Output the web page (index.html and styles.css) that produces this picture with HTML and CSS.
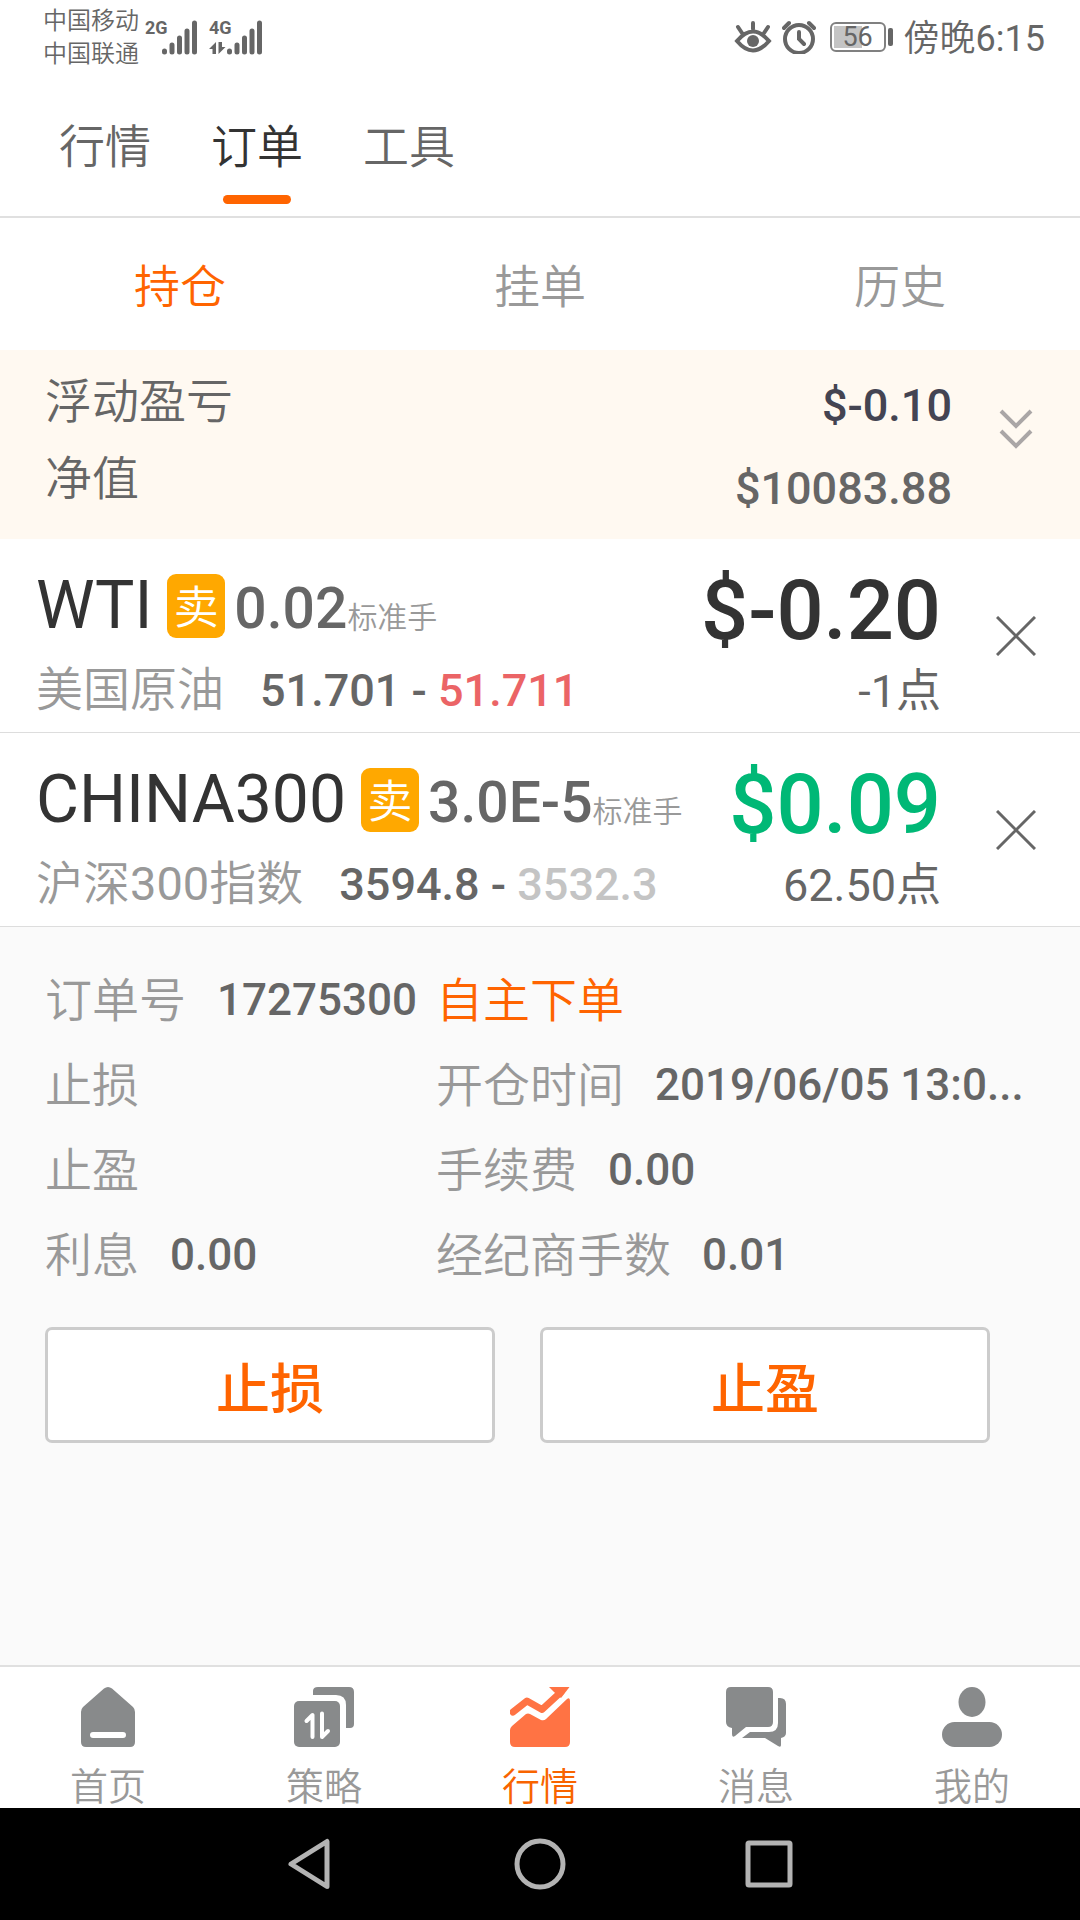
FILE: index.html
```html
<!DOCTYPE html>
<html lang="zh-CN">
<head>
<meta charset="utf-8">
<meta name="viewport" content="width=device-width, initial-scale=1">
<title>订单</title>
<link rel="stylesheet" href="styles.css">
</head>
<body>
<div class="app">
  <header class="status">
    <div class="carriers"><span>中国移动</span><span>中国联通</span></div>
    <svg class="signals" width="120" height="52" viewBox="0 -16 120 52" aria-hidden="true">
      <g class="signal-text"><text x="0" y="13">2G</text><text x="64" y="13">4G</text></g>
      <g class="bars">
        <path d="M19.500 30v1M27 24v7M34.500 17v14M42 10v21M49.500 2v29"/>
        <path d="M84.500 30v1M92 24v7M99.500 17v14M107 10v21M114.500 2v29"/>
      </g>
      <path class="data" d="M64 28l7-7v12h-3.500v-5zM73.500 21h3.500v5h3.500l-7 7z"/>
    </svg>
    <div class="status-right">
      <svg width="38" height="34" viewBox="0 0 38 34" class="line-icon" aria-hidden="true">
        <path d="M3 21Q19 2 35 21Q19 40 3 21zM19 9V3M8 13L4 7M30 13l4-6"/><circle cx="19" cy="21" r="6" class="solid"/>
      </svg>
      <svg width="34" height="34" viewBox="0 0 34 34" class="line-icon" aria-hidden="true">
        <circle cx="17" cy="19" r="14"/><path d="M17 12v7l5 5M2 8l5-5M32 8l-5-5"/>
      </svg>
      <div class="battery"><span>56</span></div>
      <span class="clock">傍晚<span class="digits">6:15</span></span>
    </div>
  </header>

  <nav class="tabs">
    <a href="#quotes">行情</a>
    <a href="#orders" class="active">订单</a>
    <a href="#tools">工具</a>
  </nav>

  <nav class="subtabs">
    <a href="#positions" class="active">持仓</a>
    <a href="#pending">挂单</a>
    <a href="#history">历史</a>
  </nav>

  <section class="summary">
    <div class="summary-labels"><span>浮动盈亏</span><span>净值</span></div>
    <div class="summary-values"><span class="dark">$-0.10</span><span>$10083.88</span></div>
    <button class="icon-button" type="button" aria-label="展开">
      <svg width="34" height="40" viewBox="0 0 34 40"><path d="M2 2l15 15L32 2M2 22l15 15L32 22" fill="none" stroke="#aaa6a6" stroke-width="4"/></svg>
    </button>
  </section>

  <main class="content">
    <article class="position">
      <div class="position-info">
        <div class="position-title"><h2>WTI</h2><span class="badge">卖</span><span class="lots">0.02</span><small>标准手</small></div>
        <div class="position-detail"><span class="name">美国原油</span><span class="num">51.701 - <span class="loss">51.711</span></span></div>
      </div>
      <div class="position-profit"><strong>$-0.20</strong><span>-1点</span></div>
      <button class="icon-button" type="button" aria-label="平仓">
        <svg width="40" height="40" viewBox="0 0 40 40"><path d="M1 1l38 38M39 1L1 39" stroke="#666" stroke-width="3"/></svg>
      </button>
    </article>
    <article class="position">
      <div class="position-info">
        <div class="position-title"><h2>CHINA300</h2><span class="badge">卖</span><span class="lots">3.0E-5</span><small>标准手</small></div>
        <div class="position-detail"><span class="name">沪深<span class="digits">300</span>指数</span><span class="num">3594.8 - <span class="muted">3532.3</span></span></div>
      </div>
      <div class="position-profit gain"><strong>$0.09</strong><span>62.50点</span></div>
      <button class="icon-button" type="button" aria-label="平仓">
        <svg width="40" height="40" viewBox="0 0 40 40"><path d="M1 1l38 38M39 1L1 39" stroke="#666" stroke-width="3"/></svg>
      </button>
    </article>

    <section class="order">
      <dl class="fields">
        <div><dt>订单号</dt><dd>17275300</dd></div>
        <div><dt class="accent">自主下单</dt></div>
        <div><dt>止损</dt></div>
        <div><dt>开仓时间</dt><dd>2019/06/05 13:0...</dd></div>
        <div><dt>止盈</dt></div>
        <div><dt>手续费</dt><dd>0.00</dd></div>
        <div><dt>利息</dt><dd>0.00</dd></div>
        <div><dt>经纪商手数</dt><dd>0.01</dd></div>
      </dl>
      <div class="actions">
        <button type="button">止损</button>
        <button type="button">止盈</button>
      </div>
    </section>
  </main>

  <nav class="bottom-nav">
    <a href="#home">
      <svg width="60" height="60" viewBox="0 0 60 60"><path fill-rule="evenodd" d="M26 1.500Q30-1.500 34 1.500L55 20Q57 22 57 25V55Q57 60 52 60H8Q3 60 3 55V25Q3 22 5 20zM15 45a3 3 0 0 0 0 6H45a3 3 0 0 0 0-6z"/></svg>
      <span>首页</span>
    </a>
    <a href="#strategy">
      <svg width="60" height="60" viewBox="0 0 60 60"><path d="M19 8V4Q19 0 24 0H55Q60 0 60 5V37Q60 41 56 41H52V18Q52 8 42 8z"/><rect y="14" width="46" height="46" rx="5"/><path d="M12.500 34l6-6V50M28 26.500V50l6-6" fill="none" stroke="#fff" stroke-width="4" stroke-linejoin="round" stroke-linecap="round"/></svg>
      <span>策略</span>
    </a>
    <a href="#quotes" class="active">
      <svg width="60" height="60" viewBox="0 0 60 60"><path d="M3 25L17 14 32 22.500 51 5" fill="none" stroke="currentColor" stroke-width="7" stroke-linejoin="round" stroke-linecap="round"/><path d="M39 0H59.500L51 11 44 5z"/><path d="M0 43Q0 41 2 39L16 27Q18 26 20 27L31 33Q34 34 36 32L57 12Q60 10 60 14V55Q60 60 55 60H5Q0 60 0 55z"/></svg>
      <span>行情</span>
    </a>
    <a href="#messages">
      <svg width="60" height="60" viewBox="0 0 60 60"><path d="M5 0H42Q47 0 47 5V35Q47 40 42 40H20L9 49Q6 51 6 47V41Q0 40 0 35V5Q0 0 5 0zM52 11H54Q60 11 60 17V46Q60 50 55 51V58Q55 61 52 59L39 51H16L24 45H43Q52 45 52 36z"/></svg>
      <span>消息</span>
    </a>
    <a href="#me">
      <svg width="60" height="60" viewBox="0 0 60 60"><ellipse cx="30" cy="15" rx="13.500" ry="15"/><rect y="35" width="60" height="25" rx="12.500"/></svg>
      <span>我的</span>
    </a>
  </nav>

  <footer class="system-nav">
    <button type="button" aria-label="返回"><svg width="50" height="56" viewBox="0 0 50 56"><path d="M41 5.500V50.500L5 28z"/></svg></button>
    <button type="button" aria-label="主屏幕"><svg width="56" height="56" viewBox="0 0 56 56"><circle cx="28" cy="28" r="23"/></svg></button>
    <button type="button" aria-label="最近任务"><svg width="50" height="56" viewBox="0 0 50 56"><rect x="4" y="7" width="42" height="42" rx="1"/></svg></button>
  </footer>
</div>
</body>
</html>
```

FILE: styles.css
```css
* { box-sizing: border-box; margin: 0; padding: 0; }

body {
  background: #fff;
  color: #666;
  font-family: Roboto, "Noto Sans CJK SC", sans-serif;
  font-weight: 350;
}

a { color: inherit; text-decoration: none; }
svg { display: block; flex: none; }
button { font-family: inherit; cursor: pointer; }
.digits { font-weight: 400; }

.app { display: flex; flex-direction: column; min-height: 100vh; }

/* Status bar */
.status { display: flex; align-items: flex-start; height: 76px; padding: 5px 35px 0 43px; }
.carriers { display: flex; flex-direction: column; font-size: 24px; line-height: 33px; }
.signals { margin-left: 6px; }
.signal-text { font-family: Roboto, sans-serif; font-size: 18px; font-weight: 700; fill: #666; }
.bars path { fill: none; stroke: #666; stroke-width: 5; stroke-linecap: round; }
.data { fill: #666; }
.status-right { display: flex; align-items: center; gap: 10px; height: 64px; margin-left: auto; }
.line-icon { fill: none; stroke: #666; stroke-width: 4; stroke-linecap: round; }
.line-icon .solid { fill: #666; stroke: none; }
.battery {
  position: relative;
  width: 56px;
  height: 30px;
  margin: 0 8px 0 4px;
  border: 2px solid #808080;
  border-radius: 6px;
  background: linear-gradient(#c4c4c4, #c4c4c4) 2px 2px / 28px 22px no-repeat;
  font-size: 27px;
  font-weight: 400;
  line-height: 27px;
  text-align: center;
}
.battery::after {
  content: "";
  position: absolute;
  top: 4px;
  right: -9px;
  width: 5px;
  height: 18px;
  border-radius: 2px;
  background: #666;
}
.clock { padding-top: 3px; font-size: 36px; line-height: 60px; }

/* Main tabs */
.tabs {
  display: flex;
  gap: 60px;
  height: 142px;
  padding: 0 59px;
  border-bottom: 2px solid #e0e0e0;
  font-size: 46px;
  line-height: 143px;
}
.tabs a { position: relative; }
.tabs .active { color: #333; }
.tabs .active::after {
  content: "";
  position: absolute;
  left: 12px;
  right: 12px;
  bottom: 12px;
  height: 9px;
  border-radius: 5px;
  background: #ff6400;
}

.subtabs {
  display: grid;
  grid-template-columns: repeat(3, 1fr);
  height: 132px;
  color: #999;
  font-size: 46px;
  line-height: 138px;
  text-align: center;
}
.subtabs .active { color: #ff6400; }

/* Account summary */
.summary {
  display: flex;
  height: 189px;
  padding-left: 45px;
  background: #fff9f1;
}
.summary-labels,
.summary-values { display: flex; flex-direction: column; }
.summary-labels { padding-top: 13px; font-size: 47px; line-height: 77px; }
.summary-values {
  flex: 1;
  padding-top: 14px;
  font-size: 45px;
  font-weight: 500;
  line-height: 83px;
  text-align: right;
}
.summary-values .dark { color: #444452; }
.icon-button {
  display: flex;
  align-items: center;
  justify-content: center;
  width: 128px;
  border: 0;
  background: none;
}
.summary .icon-button { padding-top: 59px; align-items: flex-start; }

/* Positions */
.content { display: flex; flex: 1; flex-direction: column; }
.position {
  display: flex;
  height: 194px;
  padding-left: 36px;
  border-bottom: 1px solid #ddd;
  background: #fff;
}
.position-info { display: flex; flex-direction: column; padding-top: 25px; }
.position-title { display: flex; align-items: baseline; height: 84px; line-height: 84px; white-space: nowrap; }
.position-title h2 { color: #333; font-size: 66px; font-weight: 400; }
.badge {
  align-self: center;
  width: 58px;
  height: 64px;
  margin: 0 9px 0 15px;
  border-radius: 9px;
  background: #ffa800;
  color: #fff;
  font-size: 45px;
  line-height: 69px;
  text-align: center;
}
.lots { font-size: 57px; font-weight: 500; }
.position-title small { color: #999; font-size: 30px; }
.position-detail { display: flex; gap: 36px; align-items: baseline; font-size: 45px; line-height: 84px; white-space: nowrap; }
.name { color: #999; font-size: 47px; }
.num { font-weight: 500; }
.loss { color: #eb6466; }
.muted { color: #c4c4c4; }
.position-profit {
  display: flex;
  flex: 1;
  flex-direction: column;
  padding: 30px 11px 0 0;
  font-size: 45px;
  font-weight: 400;
  text-align: right;
  white-space: nowrap;
}
.position-profit strong { height: 82px; color: #333; font-size: 83px; font-weight: 500; line-height: 84px; }
.position-profit span { line-height: 82px; }
.position-profit.gain strong { color: #00b876; }

/* Expanded order */
.order { flex: 1; padding: 31px 45px 0; background: #fafafa; }
.fields {
  display: grid;
  grid-template-columns: 391px 1fr;
  grid-auto-rows: 85px;
  font-size: 47px;
  line-height: 85px;
  white-space: nowrap;
}
.fields div { display: flex; gap: 31px; }
.fields dt { color: #999; }
.fields .accent { color: #ff6400; }
.fields dd { font-size: 44px; font-weight: 500; }
.actions { display: grid; grid-template-columns: 1fr 1fr; gap: 45px; padding: 29px 45px 0 0; }
.actions button {
  height: 116px;
  border: 3px solid #ccc;
  border-radius: 7px;
  background: #fff;
  color: #ff6400;
  font-size: 54px;
  font-weight: 500;
}

/* Bottom navigation */
.bottom-nav {
  display: grid;
  grid-template-columns: repeat(5, 1fr);
  height: 143px;
  border-top: 2px solid #e0e0e0;
  color: #999;
  font-size: 38px;
  line-height: 80px;
}
.bottom-nav a { display: flex; flex-direction: column; align-items: center; padding-top: 20px; height: 141px; }
.bottom-nav svg { fill: #888a8b; }
.bottom-nav .active { color: #f86400; }
.bottom-nav .active svg { color: #ff7344; fill: #ff7344; }

.system-nav {
  display: flex;
  align-items: center;
  justify-content: center;
  gap: 176px;
  height: 112px;
  background: #000;
}
.system-nav button { border: 0; background: none; }
.system-nav svg { fill: none; stroke: #b3b3b3; stroke-width: 5; stroke-linejoin: round; }
```
